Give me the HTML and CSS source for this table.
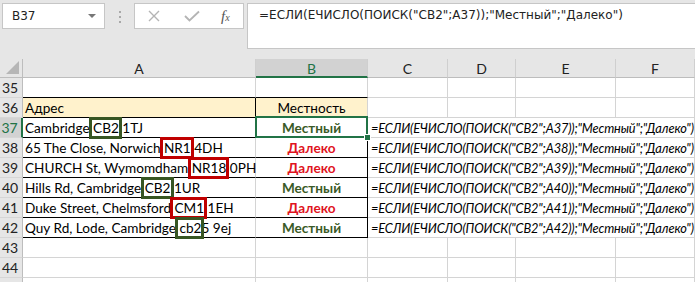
FILE: index.html
```html
<!DOCTYPE html>
<html>
<head>
	<meta charset="utf-8">
	<title>Книга1 - Excel</title>
	<link rel="stylesheet" href="styles.css">
</head>
<body>
	<div class="toolbar">
		<div class="namebox">
			<span>B37</span>
			<span class="drop"></span>
		</div>
		<div class="grip"><i></i><i></i><i></i></div>
		<div class="fbtns">
			<svg width="12" height="12" viewBox="0 0 12 12"><path d="M1 1 L11 11 M11 1 L1 11" stroke="#b4b4b4" stroke-width="1.4" fill="none"/></svg>
			<svg width="16" height="12" viewBox="0 0 16 12"><path d="M1 6 L5.5 10.5 L15 1.5" stroke="#b4b4b4" stroke-width="1.8" fill="none"/></svg>
			<span class="fx">f<sub>x</sub></span>
		</div>
		<div class="formula">=ЕСЛИ(ЕЧИСЛО(ПОИСК("СВ2";A37));"Местный";"Далеко")</div>
	</div>

	<div class="sheet">
		<div class="corner"><span class="tri"></span></div>
		<div class="colhead">A</div>
		<div class="colhead sel">B</div>
		<div class="colhead">C</div>
		<div class="colhead">D</div>
		<div class="colhead">E</div>
		<div class="colhead">F</div>

		<div class="rowhead">35</div>
		<div class="cell top"></div>
		<div class="cell top"></div>
		<div class="cell"></div><div class="cell"></div><div class="cell"></div><div class="cell"></div>

		<div class="rowhead">36</div>
		<div class="cell hd a">Адрес</div>
		<div class="cell hd b center">Местность</div>
		<div class="cell"></div><div class="cell"></div><div class="cell"></div><div class="cell"></div>

		<div class="rowhead sel">37</div>
		<div class="cell tb a">Cambridge <span class="mark ok">CB2</span> 1TJ</div>
		<div class="cell tb b center local active">Местный</div>
		<div class="cell wide">=ЕСЛИ(ЕЧИСЛО(ПОИСК("СВ2";A37));"Местный";"Далеко")</div>

		<div class="rowhead">38</div>
		<div class="cell tb a">65 The Close, Norwich <span class="mark bad">NR1</span> 4DH</div>
		<div class="cell tb b center far">Далеко</div>
		<div class="cell wide">=ЕСЛИ(ЕЧИСЛО(ПОИСК("СВ2";A38));"Местный";"Далеко")</div>

		<div class="rowhead">39</div>
		<div class="cell tb a">CHURCH St, Wymomdham <span class="mark bad">NR18</span> 0PH</div>
		<div class="cell tb b center far">Далеко</div>
		<div class="cell wide">=ЕСЛИ(ЕЧИСЛО(ПОИСК("СВ2";A39));"Местный";"Далеко")</div>

		<div class="rowhead">40</div>
		<div class="cell tb a">Hills Rd, Cambridge <span class="mark ok">CB2</span> 1UR</div>
		<div class="cell tb b center local">Местный</div>
		<div class="cell wide">=ЕСЛИ(ЕЧИСЛО(ПОИСК("СВ2";A40));"Местный";"Далеко")</div>

		<div class="rowhead">41</div>
		<div class="cell tb a">Duke Street, Chelmsford <span class="mark bad">CM1</span> 1EH</div>
		<div class="cell tb b center far">Далеко</div>
		<div class="cell wide">=ЕСЛИ(ЕЧИСЛО(ПОИСК("СВ2";A41));"Местный";"Далеко")</div>

		<div class="rowhead">42</div>
		<div class="cell tb a">Quy Rd, Lode, Cambridge <span class="mark ok">cb2</span>5 9ej</div>
		<div class="cell tb b center local">Местный</div>
		<div class="cell wide">=ЕСЛИ(ЕЧИСЛО(ПОИСК("СВ2";A42));"Местный";"Далеко")</div>

		<div class="rowhead">43</div>
		<div class="cell"></div><div class="cell"></div><div class="cell"></div><div class="cell"></div><div class="cell"></div><div class="cell"></div>

		<div class="rowhead">44</div>
		<div class="cell"></div><div class="cell"></div><div class="cell"></div><div class="cell"></div><div class="cell"></div><div class="cell"></div>

		<div class="rowhead"></div>
		<div class="cell"></div><div class="cell"></div><div class="cell"></div><div class="cell"></div><div class="cell"></div><div class="cell"></div>
	</div>
</body>
</html>
```

FILE: styles.css
```css
body {
	margin: 0;
	background: #e6e6e6;
	font-family: Lato, "Noto Sans", sans-serif;
	font-size: 13.6px;
	color: #000;
	overflow: hidden;
	height: 282px;
}

/* formula bar */
.toolbar {
	display: flex;
	align-items: flex-start;
	height: 59px;
	padding-top: 3px;
	box-sizing: border-box;
}
.namebox {
	display: flex;
	align-items: center;
	justify-content: space-between;
	width: 103px;
	height: 26px;
	margin-left: 2px;
	padding: 0 8px 0 9px;
	box-sizing: border-box;
	background: #fff;
	border: 1px solid #c6c6c6;
	font-family: "DejaVu Sans", sans-serif;
	font-size: 12px;
	color: #222;
}
.drop {
	width: 0;
	height: 0;
	border-left: 4px solid transparent;
	border-right: 4px solid transparent;
	border-top: 4px solid #777;
}
.grip {
	display: flex;
	flex-direction: column;
	gap: 3px;
	width: 29px;
	align-items: center;
	padding-top: 8px;
}
.grip i {
	width: 2px;
	height: 2px;
	background: #a8a8a8;
}
.fbtns {
	display: flex;
	align-items: center;
	width: 110px;
	height: 26px;
	box-sizing: border-box;
	background: #fff;
	border: 1px solid #c6c6c6;
	padding-left: 13px;
	gap: 24px;
}
.fx {
	font-family: "Liberation Serif", serif;
	font-style: italic;
	font-size: 15px;
	color: #555;
	margin-left: -3px;
}
.fx sub {
	font-size: 10px;
	vertical-align: 0;
}
.formula {
	flex: 1;
	height: 46px;
	margin-left: 3px;
	padding: 4px 0 0 11px;
	box-sizing: border-box;
	background: #fff;
	border: 1px solid #c6c6c6;
	border-right: none;
	font-family: "DejaVu Sans", sans-serif;
	font-size: 12px;
	color: #222;
	white-space: nowrap;
}

/* worksheet */
.sheet {
	display: grid;
	grid-template-columns: 23px 233px 112px 80px 68px 100px 79px;
	grid-template-rows: 19px repeat(11, 20px);
	background: #fff;
}
.corner {
	background: #e6e6e6;
	border-right: 1px solid #bdbdbd;
	border-bottom: 1px solid #bdbdbd;
	position: relative;
}
.tri {
	position: absolute;
	right: 3px;
	bottom: 3px;
	width: 0;
	height: 0;
	border-left: 13px solid transparent;
	border-bottom: 13px solid #b6b6b6;
}
.colhead {
	background: #e6e6e6;
	border-right: 1px solid #cfcfcf;
	border-bottom: 1px solid #bdbdbd;
	text-align: center;
	line-height: 19px;
	font-size: 14px;
	color: #222;
}
.colhead.sel {
	background: #d2d2d2;
	color: #217346;
	border-bottom: 2px solid #217346;
}
.rowhead {
	background: #e6e6e6;
	border-right: 1px solid #bdbdbd;
	border-bottom: 1px solid #d6d6d6;
	text-align: center;
	line-height: 20px;
	font-size: 14px;
	color: #222;
	padding-right: 2px;
}
.rowhead.sel {
	background: #d2d2d2;
	color: #217346;
	border-right: 2px solid #217346;
}
.cell {
	border-right: 1px solid #d4d4d4;
	border-bottom: 1px solid #d4d4d4;
	padding-left: 2px;
	line-height: 20px;
	white-space: nowrap;
	position: relative;
}
.cell.top {
	border-bottom-color: #000;
}
.cell.tb {
	border-bottom-color: #000;
}
.cell.hd {
	background: #fff2cc;
	border-bottom-color: #000;
}
.cell.hd.a {
	border-right-color: #000;
}
.cell.tb.b {
	border-right-color: #000;
}
.center {
	text-align: center;
	padding-left: 0;
}
.local {
	color: #3a5a26;
	font-weight: bold;
}
.far {
	color: #e0141e;
	font-weight: bold;
}
.wide {
	grid-column: span 4;
	font-style: italic;
	font-size: 12.8px;
	letter-spacing: -0.15px;
	padding-left: 3px;
}
.active::after {
	content: "";
	position: absolute;
	left: -1px;
	top: -2px;
	right: -1px;
	bottom: -1px;
	border: 2px solid #217346;
}
.active::before {
	content: "";
	position: absolute;
	right: -4px;
	bottom: -4px;
	width: 5px;
	height: 5px;
	background: #217346;
	border: 1px solid #fff;
	z-index: 2;
}

/* shapes drawn over the postcodes */
.mark {
	position: relative;
}
.mark::after {
	content: "";
	position: absolute;
	left: -4px;
	right: -3px;
	top: -3px;
	bottom: -3px;
	border: 3px solid;
}
.mark.ok::after {
	border-color: #375623;
}
.mark.bad::after {
	border-color: #c00000;
}
```
